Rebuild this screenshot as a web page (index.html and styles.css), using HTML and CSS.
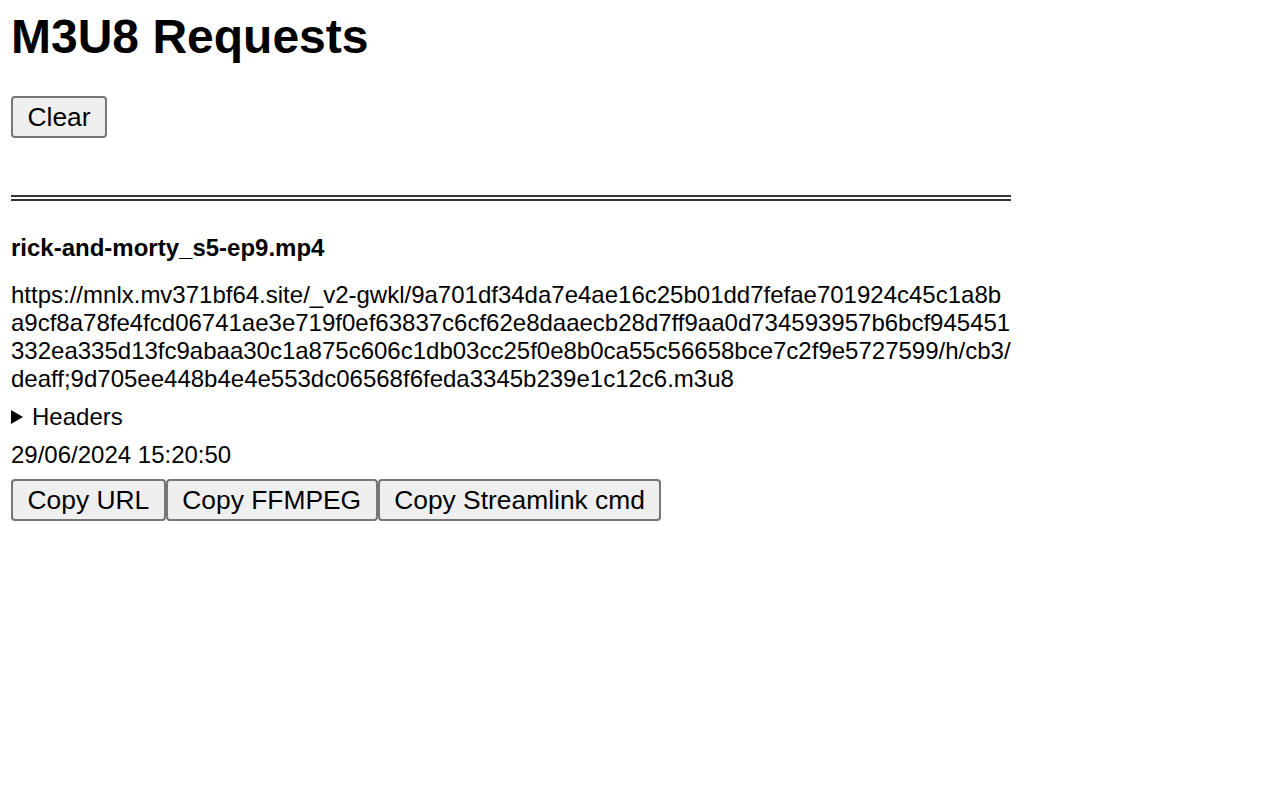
FILE: index.html
```html
<!DOCTYPE html>
<html>
<head>
<meta charset="utf-8">
<title>M3U8 Requests</title>
<link rel="stylesheet" href="styles.css">
</head>
<body>
<div class="page">
  <h1 class="title">M3U8 Requests</h1>
  <div class="toolbar"><button class="btn">Clear</button></div>
  <div class="list">
    <div class="entry">
      <h4 class="name">rick-and-morty_s5-ep9.mp4</h4>
      <p class="url">https://mnlx.mv371bf64.site/_v2-gwkl/9a701df34da7e4ae16c25b01dd7fefae701924c45c1a8ba9cf8a78fe4fcd06741ae3e719f0ef63837c6cf62e8daaecb28d7ff9aa0d734593957b6bcf945451332ea335d13fc9abaa30c1a875c606c1db03cc25f0e8b0ca55c56658bce7c2f9e5727599/h/cb3/deaff;9d705ee448b4e4e553dc06568f6feda3345b239e1c12c6.m3u8</p>
      <details class="headers"><summary>Headers</summary></details>
      <p class="date">29/06/2024 15:20:50</p>
      <div class="actions"><button class="btn">Copy URL</button><button class="btn">Copy FFMPEG</button><button class="btn">Copy Streamlink cmd</button></div>
    </div>
  </div>
</div>
</body>
</html>
```

FILE: styles.css
```css
html, body {
  margin: 0;
  padding: 0;
  background: #fff;
}
body {
  font-family: "Liberation Sans", Arial, sans-serif;
  font-size: 24px;
  color: #000;
}
.page {
  width: 1000px;
  padding: 9px 0 0 11px;
}
.title {
  margin: 0;
  font-size: 48px;
  font-weight: bold;
  line-height: normal;
}
.toolbar {
  margin-top: 32px;
  display: flex;
}
.btn {
  font-family: "Liberation Sans", Arial, sans-serif;
  font-size: 26.4px;
  color: #000;
  background: #efefef;
  border: 2px solid #767676;
  border-radius: 4px;
  padding: 3.5px 14.5px;
  margin: 0;
  line-height: normal;
}
.list {
  margin-top: 57px;
  border-top: 6px double #333;
}
.name {
  margin: 33px 0 0;
  font-size: 24px;
  font-weight: bold;
  line-height: normal;
}
.url {
  margin: 19px 0 0;
  word-break: break-all;
  line-height: normal;
}
.headers {
  margin-top: 10px;
}
.headers summary {
  list-style: none;
  display: flex;
  align-items: center;
  cursor: pointer;
}
.headers summary::-webkit-details-marker {
  display: none;
}
.headers summary::before {
  content: "";
  display: block;
  width: 0;
  height: 0;
  border-left: 12px solid #000;
  border-top: 7px solid transparent;
  border-bottom: 7px solid transparent;
  margin-right: 9px;
}
.date {
  margin: 10px 0 0;
}
.actions {
  margin-top: 10px;
  display: flex;
}
```
